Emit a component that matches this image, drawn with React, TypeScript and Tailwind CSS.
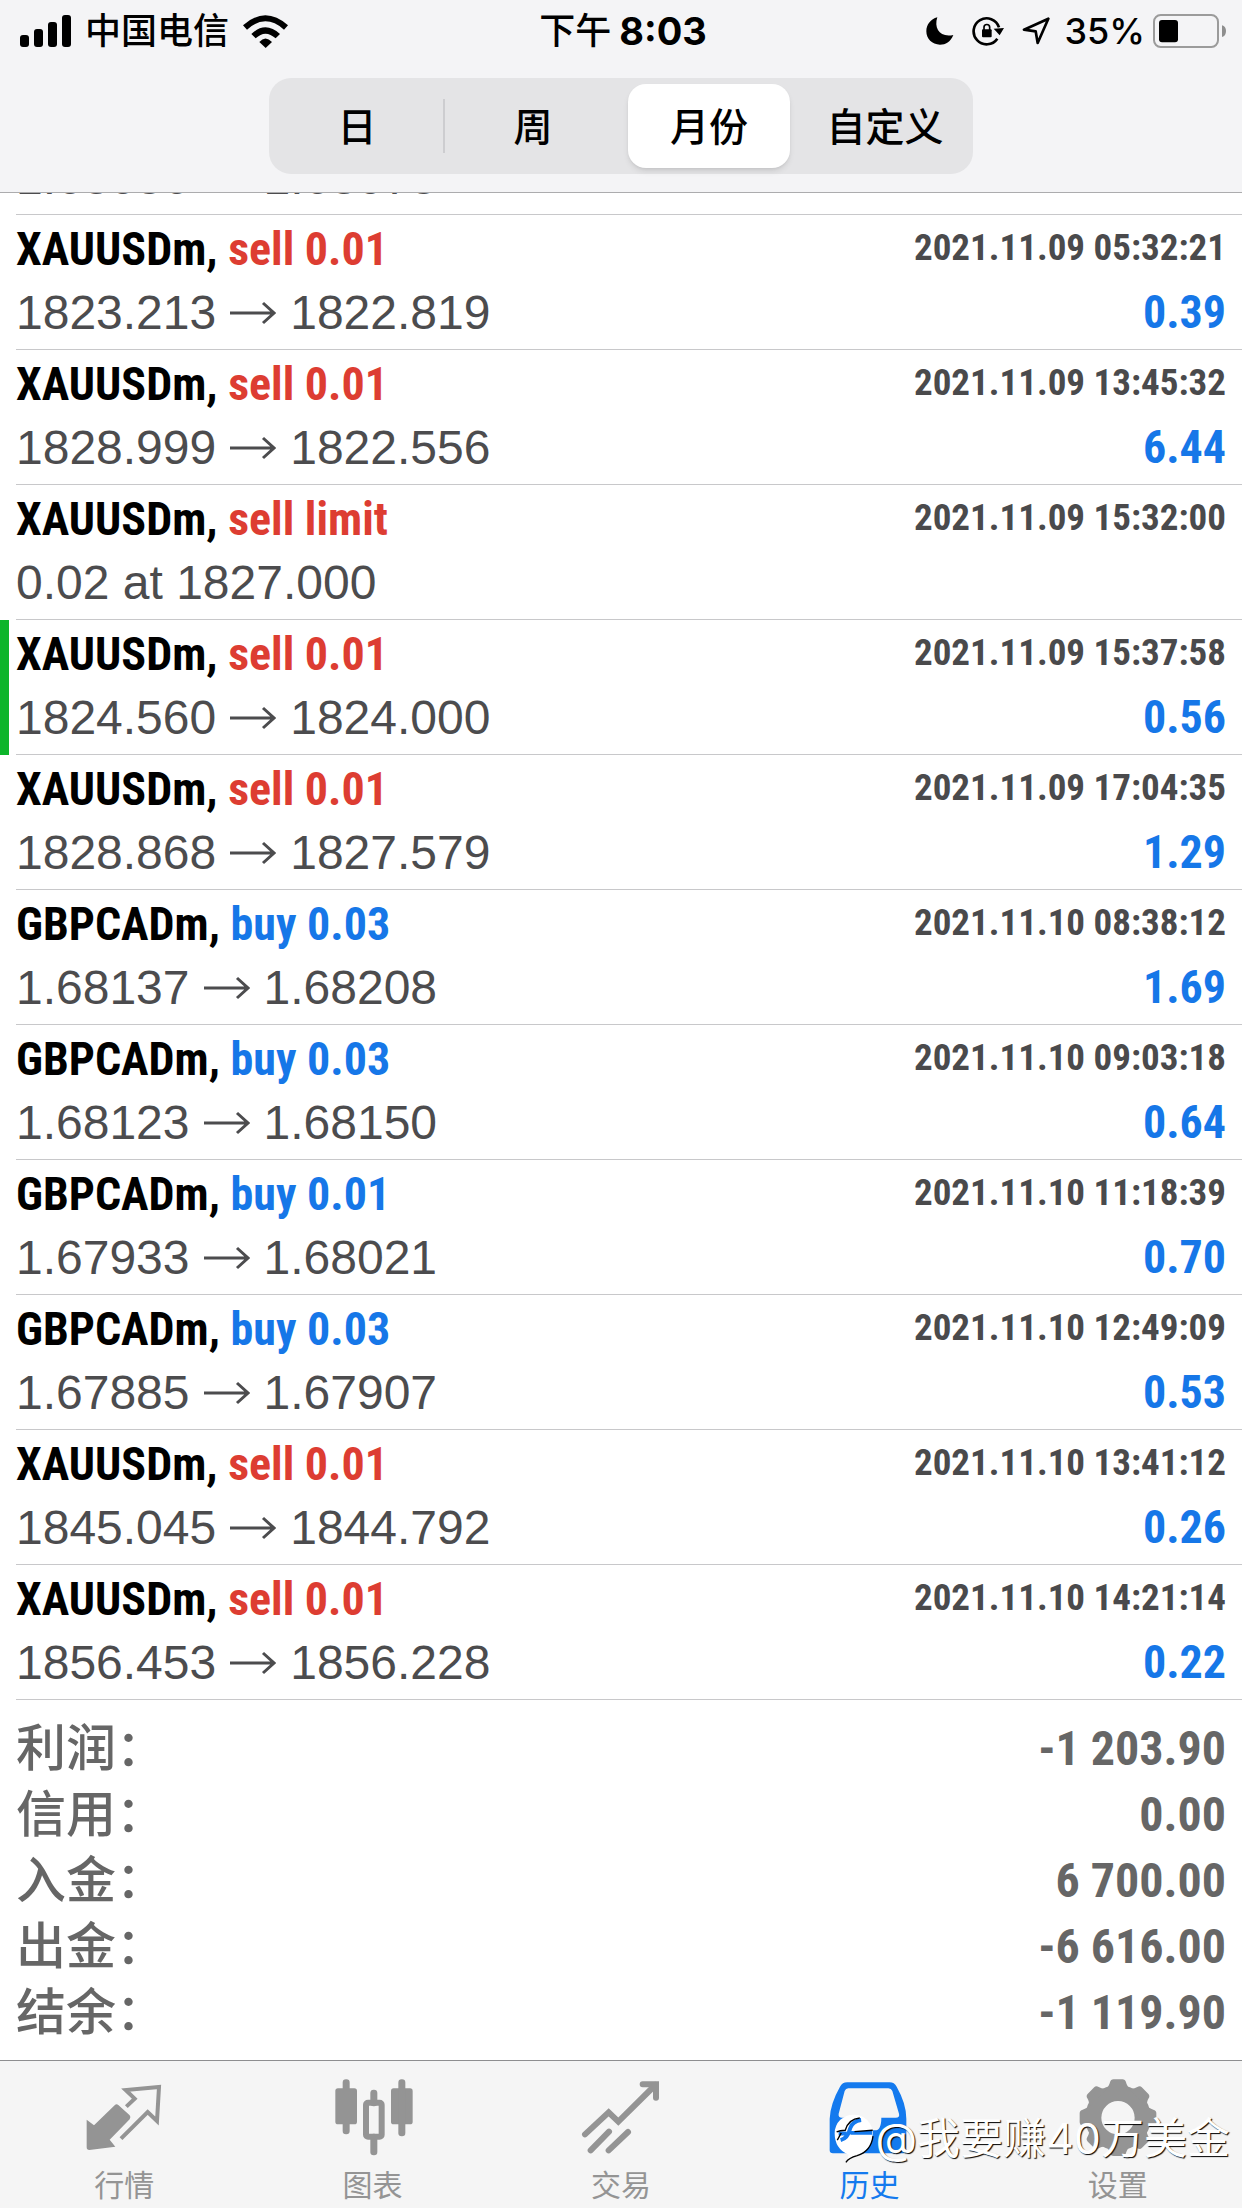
import { useState } from "react"
import clsx from "clsx"

type Deal = {
  symbol: string
  side: "buy" | "sell"
  volume: string
  time: string
  from?: string
  to?: string
  note?: string
  profit?: string
  marked?: boolean
}

const deals: Deal[] = [
  { symbol: "GBPCADm", side: "buy", volume: "0.03", time: "2021.11.08 22:14:06", from: "1.68036", to: "1.68073", profit: "1.36" },
  { symbol: "XAUUSDm", side: "sell", volume: "0.01", time: "2021.11.09 05:32:21", from: "1823.213", to: "1822.819", profit: "0.39" },
  { symbol: "XAUUSDm", side: "sell", volume: "0.01", time: "2021.11.09 13:45:32", from: "1828.999", to: "1822.556", profit: "6.44" },
  { symbol: "XAUUSDm", side: "sell", volume: "limit", time: "2021.11.09 15:32:00", note: "0.02 at 1827.000" },
  { symbol: "XAUUSDm", side: "sell", volume: "0.01", time: "2021.11.09 15:37:58", from: "1824.560", to: "1824.000", profit: "0.56", marked: true },
  { symbol: "XAUUSDm", side: "sell", volume: "0.01", time: "2021.11.09 17:04:35", from: "1828.868", to: "1827.579", profit: "1.29" },
  { symbol: "GBPCADm", side: "buy", volume: "0.03", time: "2021.11.10 08:38:12", from: "1.68137", to: "1.68208", profit: "1.69" },
  { symbol: "GBPCADm", side: "buy", volume: "0.03", time: "2021.11.10 09:03:18", from: "1.68123", to: "1.68150", profit: "0.64" },
  { symbol: "GBPCADm", side: "buy", volume: "0.01", time: "2021.11.10 11:18:39", from: "1.67933", to: "1.68021", profit: "0.70" },
  { symbol: "GBPCADm", side: "buy", volume: "0.03", time: "2021.11.10 12:49:09", from: "1.67885", to: "1.67907", profit: "0.53" },
  { symbol: "XAUUSDm", side: "sell", volume: "0.01", time: "2021.11.10 13:41:12", from: "1845.045", to: "1844.792", profit: "0.26" },
  { symbol: "XAUUSDm", side: "sell", volume: "0.01", time: "2021.11.10 14:21:14", from: "1856.453", to: "1856.228", profit: "0.22" },
]

const totals = [
  { label: "利润：", value: "-1 203.90" },
  { label: "信用：", value: "0.00" },
  { label: "入金：", value: "6 700.00" },
  { label: "出金：", value: "-6 616.00" },
  { label: "结余：", value: "-1 119.90" },
]

const periods = ["日", "周", "月份", "自定义"]

function StatusBar() {
  return (
    <div className="grid h-[62px] grid-cols-[1fr_auto_1fr] items-center pl-5 pr-4 font-['Inter','Noto_Sans_CJK_SC',sans-serif] text-4xl leading-[44px] font-medium text-black">
      <div className="flex items-center gap-3.5">
        <svg className="h-8 w-[51px]" viewBox="0 0 51 32">
          <rect x="0" y="20" width="9" height="12" rx="3" />
          <rect x="14" y="14" width="9" height="18" rx="3" />
          <rect x="28" y="7" width="9" height="25" rx="3" />
          <rect x="42" y="0" width="9" height="32" rx="3" />
        </svg>
        <span>中国电信</span>
        <svg className="h-[33px] w-[45px]" viewBox="730 38 135 99">
          <path d="M730 69 Q797 9 865 69 L853 82 Q797 32 742 82 Z" />
          <path d="M755 95 Q797 55 841 95 L828 108 Q797 80 768 108 Z" />
          <path d="M779 119 Q797 98 817 119 L798 137 Z" />
        </svg>
      </div>

      <div className="flex items-center gap-2">
        <span>下午</span>
        <span className="text-[38px] font-bold">8:03</span>
      </div>

      <div className="flex items-center justify-end">
        <svg className="mr-[18px] h-7 w-7" viewBox="263 52 84 84">
          <path d="M297 53 C286 86 305 115 345 106 C336 127 322 135 305 135 C281 135 264 117 264 95 C264 75 277 58 297 53 Z" />
        </svg>
        <svg className="mr-[18px] h-[30px] w-8" viewBox="401 50 96 90">
          <path d="M482 84 A39 39 0 1 0 477 118" fill="none" stroke="black" strokeWidth="8" />
          <path d="M466 88 L497 86 L484 108 Z" />
          <rect x="431" y="90" width="29" height="24" rx="3" />
          <path d="M437 92 V84 a8 8 0 0 1 17 0 V92" fill="none" stroke="black" strokeWidth="5" />
        </svg>
        <svg className="mr-3.5 h-7 w-7" viewBox="550 50 84 84">
          <path d="M629 55 L556 88 L591 93 L597 128 Z" fill="none" stroke="black" strokeWidth="8" strokeLinejoin="round" />
        </svg>
        <span className="mr-2">35%</span>
        <svg className="h-[34px] w-[73px]" viewBox="939 38 219 102">
          <rect x="942" y="41" width="192" height="96" rx="20" fill="none" stroke="#9b9b9b" strokeWidth="6" />
          <rect x="957" y="56" width="57" height="67" rx="9" />
          <path d="M1146 72 Q1158 76 1158 89 Q1158 104 1146 107 Z" fill="#8e8e8e" />
        </svg>
      </div>
    </div>
  )
}

function DealRow({ deal }: { deal: Deal }) {
  return (
    <li className={clsx("border-l-[9px] pl-[7px]", deal.marked ? "border-[#0db52b]" : "border-transparent")}>
      <div className="border-b border-[#c8c8ca] pt-[3px] pr-4 pb-[5px] text-5xl leading-[63px]">
        <div className="flex justify-between font-['Roboto_Condensed','Roboto',sans-serif] text-[46px] font-bold">
          <span className="text-black">
            {deal.symbol},{" "}
            <span className={deal.side === "sell" ? "text-[#dd3d32]" : "text-[#1677e8]"}>
              {deal.side} {deal.volume}
            </span>
          </span>
          <time className="text-[37px] leading-[60px] text-[#4a4a4c]">{deal.time}</time>
        </div>
        <div className="flex justify-between">
          {deal.note ? (
            <span>{deal.note}</span>
          ) : (
            <span className="flex gap-3.5">
              <span>{deal.from}</span>
              <svg className="mt-5 h-6 w-[46px]" viewBox="0 0 46 24" fill="none" stroke="currentColor" strokeWidth="3">
                <path d="M0 12 H44 M33 2 L44 12 L33 22" />
              </svg>
              <span>{deal.to}</span>
            </span>
          )}
          <span className="font-['Roboto_Condensed','Roboto',sans-serif] text-[46px] font-bold text-[#1677e8]">{deal.profit}</span>
        </div>
      </div>
    </li>
  )
}

// tab icons

function QuotesIcon() {
  return (
    <svg className="size-20" viewBox="253 80 240 240">
      <path d="M261 208 L283 225 L345 165 Q350 159 356 164 L390 195 Q395 201 390 207 L330 268 L347 289 L269 299 Q261 299 261 291 Z" fill="currentColor" />
      <path d="M380 169 L405 145 L378 119 L478 110 L472 212 L444 185 L364 265" fill="none" stroke="currentColor" strokeWidth="12" />
    </svg>
  )
}

function ChartIcon() {
  return (
    <svg className="size-20" viewBox="998 80 240 240" fill="currentColor">
      <rect x="1005" y="114" width="65" height="108" rx="8" />
      <rect x="1027" y="87" width="21" height="165" rx="10" />
      <rect x="1172" y="114" width="65" height="108" rx="8" />
      <rect x="1194" y="87" width="21" height="171" rx="10" />
      <rect x="1110" y="118" width="21" height="50" rx="10" />
      <rect x="1110" y="250" width="21" height="65" rx="10" />
      <rect x="1097" y="157" width="47" height="102" rx="6" fill="none" stroke="currentColor" strokeWidth="18" />
    </svg>
  )
}

function TradeIcon() {
  return (
    <svg className="size-20" viewBox="483 80 240 240" fill="none" stroke="currentColor" strokeWidth="18" strokeLinecap="round">
      <path d="M495 252 L566 186 L595 214 L706 104" />
      <path d="M668 102 H708 V142" />
      <path d="M512 300 L567 244 M566 300 L624 245" />
    </svg>
  )
}

function HistoryIcon() {
  return (
    <svg className="size-20" viewBox="88 80 240 240">
      <path
        fill="currentColor"
        fillRule="evenodd"
        d="M143 96 H270 Q284 96 291 109 Q320 160 320 205 V300 Q320 309 310 309 H100 Q90 309 90 300 V205 Q92 160 121 109 Q128 96 143 96 Z M146 114 Q138 114 135 122 L117 190 Q115 202 127 202 H168 Q168 240 190 240 H226 Q245 240 245 202 H288 Q301 202 298 190 L278 122 Q275 114 266 114 Z"
      />
    </svg>
  )
}

function SettingsIcon() {
  return (
    <svg className="size-20" viewBox="833 80 240 240" fill="currentColor">
      <circle cx="953" cy="202" r="74" fill="none" stroke="currentColor" strokeWidth="48" />
      {[0, 45, 90, 135, 180, 225, 270, 315].map(angle => (
        <path key={angle} transform={`rotate(${angle} 953 202)`} d="M913 118 Q926 110 929 96 Q931 87 940 87 H966 Q975 87 977 96 Q980 110 993 118 Z" />
      ))}
    </svg>
  )
}

const tabs = [
  { name: "行情", Icon: QuotesIcon },
  { name: "图表", Icon: ChartIcon },
  { name: "交易", Icon: TradeIcon },
  { name: "历史", Icon: HistoryIcon },
  { name: "设置", Icon: SettingsIcon },
]

function Watermark() {
  return (
    <div className="pointer-events-none absolute right-3 bottom-11 flex items-center">
      <svg className="h-[52px] w-[43px]" viewBox="25 50 130 155">
        <path d="M88 57 A56 56 0 0 1 145 113 Q144 172 92 178 L66 200 Q70 188 72 178 Q30 160 30 113 A56 56 0 0 1 88 57 Z" fill="white" />
        <path d="M110 73 Q84 76 77 98 Q70 128 48 134 M42 114 H66 M78 112 H143" fill="none" stroke="#147aee" strokeWidth="12" />
        <path d="M36 109 Q46 104 62 104 Q72 70 106 67 M90 108 L145 104 M64 201 Q72 188 98 181 Q140 168 146 122 M38 134 L50 112" fill="none" stroke="black" strokeWidth="4" />
      </svg>
      <span className="font-['Inter','Noto_Sans_CJK_SC',sans-serif] text-[43px] leading-[50px] text-white [text-shadow:1px_1px_1px_#000]">@我要赚40万美金</span>
    </div>
  )
}

export default function App() {
  const [period, setPeriod] = useState("月份")
  const [tab, setTab] = useState("历史")

  return (
    <div className="flex h-screen flex-col overflow-hidden bg-white font-['Liberation_Sans','Noto_Sans_CJK_SC',sans-serif] text-[#4c4c4e]">
      <header className="shrink-0 border-b border-[#acacae] bg-[#f4f4f6] pb-[18px]">
        <StatusBar />
        <div className="mx-auto mt-4 flex h-24 w-full max-w-[704px] rounded-[22px] bg-[#e4e4e6] font-['Noto_Sans_CJK_SC',sans-serif] text-[39px] leading-[48px] font-medium text-black">
          {periods.map((name, i) => (
            <div key={name} className="flex flex-1 items-center">
              <button
                onClick={() => setPeriod(name)}
                className={clsx("mx-[7px] h-[84px] flex-1 rounded-[18px] pb-1 whitespace-nowrap", period === name && "bg-white shadow-md")}
              >
                {name}
              </button>
              {i === 0 && <span className="-ml-0.5 h-[54px] w-0.5 bg-[#cdcdd0]" />}
            </div>
          ))}
        </div>
      </header>

      {/* the list stays scrolled to its end */}
      <main className="flex min-h-0 flex-1 flex-col justify-end overflow-hidden">
        <ul>
          {deals.map(deal => (
            <DealRow key={deal.time} deal={deal} />
          ))}
        </ul>
        <dl className="px-4 pt-4 pb-3.5 font-bold text-[#666]">
          {totals.map(({ label, value }) => (
            <div key={label} className="flex h-[66px] items-center justify-between">
              <dt className="text-[50px] leading-[66px] font-medium">{label}</dt>
              <dd className="font-['Roboto_Condensed','Roboto',sans-serif] text-5xl leading-[66px]">{value}</dd>
            </div>
          ))}
        </dl>
      </main>

      <nav className="relative shrink-0 border-t border-[#8e8e90] bg-[#f5f5f5] font-['Noto_Sans_CJK_SC',sans-serif]">
        <div className="flex">
          {tabs.map(({ name, Icon }) => (
            <button
              key={name}
              onClick={() => setTab(name)}
              className={clsx("flex flex-1 flex-col items-center pt-4 pb-[7px]", tab === name ? "text-[#147aee]" : "text-[#949494]")}
            >
              <Icon />
              <span className="mt-2 text-3xl leading-9">{name}</span>
            </button>
          ))}
        </div>
        <Watermark />
      </nav>
    </div>
  )
}
